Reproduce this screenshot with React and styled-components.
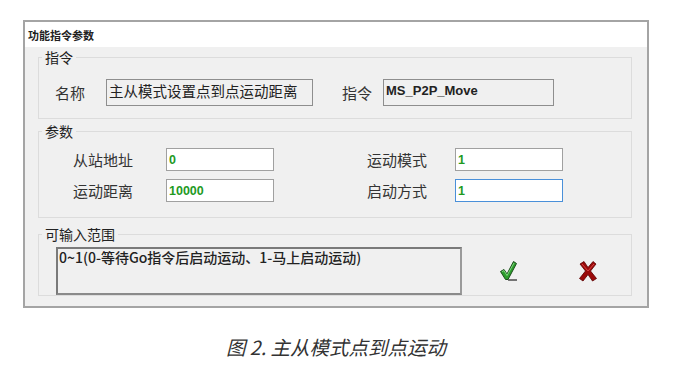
import React from 'react'
import styled, { createGlobalStyle } from 'styled-components'

const GlobalStyle = createGlobalStyle`
  body {
    margin: 0;
    background: #ffffff;
    font-family: "Noto Sans CJK SC", "Liberation Sans", sans-serif;
  }
`

const Page = styled.div`
  width: 679px;
  height: 379px;
  padding-top: 20px;
  box-sizing: border-box;
  display: flex;
  flex-direction: column;
`

const Window = styled.div`
  margin-left: 23px;
  width: 626px;
  height: 288px;
  box-sizing: border-box;
  border: 2px solid #a4a4a4;
  background: #f0f0f0;
  display: flex;
  flex-direction: column;
`

const TitleBar = styled.div`
  height: 25px;
  background: #ffffff;
  display: flex;
  align-items: center;
  padding-left: 3px;
  font-size: 11px;
  font-weight: bold;
  color: #222;
`

const Body = styled.div`
  padding: 2px 15px 10px 13px;
  display: flex;
  flex-direction: column;
`

const Group = styled.fieldset`
  margin: ${p => p.$mt || 0}px 0 0 0;
  padding: ${p => p.$pad};
  border: 1px solid #dcdcdc;
  min-width: 0;
`

const Legend = styled.legend`
  font-size: 14px;
  line-height: 16px;
  padding: 0 3px;
  margin-left: 3px;
  color: #222;
`

const Row = styled.div`
  display: flex;
  align-items: center;
  padding-left: ${p => p.$pl || 0}px;
`

const Label = styled.span`
  width: ${p => p.$w}px;
  margin-left: ${p => p.$ml || 0}px;
  flex: none;
  font-size: 15px;
  color: #333;
`

const ReadBox = styled.div`
  width: ${p => p.$w}px;
  height: 27px;
  box-sizing: border-box;
  border: 1px solid #8e8e8e;
  background: #f0f0f0;
  padding: 1px 2px;
  font-size: ${p => (p.$latin ? 13 : 14.5)}px;
  line-height: 20px;
  color: #222;
  font-family: ${p => (p.$latin ? '"Liberation Sans", sans-serif' : 'inherit')};
  font-weight: ${p => (p.$latin ? 'bold' : 'normal')};
`

const ParamGrid = styled.div`
  display: grid;
  grid-template-columns: 201px 196px;
  column-gap: 93px;
  row-gap: 8px;
  padding-left: 34px;
`

const Field = styled.div`
  display: flex;
  align-items: center;
`

const Input = styled.div`
  width: 108px;
  height: 23px;
  box-sizing: border-box;
  background: #ffffff;
  border: 1px solid ${p => (p.$focus ? '#4a90d9' : '#a0a0a0')};
  padding: 0 2px;
  display: flex;
  align-items: center;
  font-family: "Liberation Sans", sans-serif;
  font-weight: bold;
  font-size: 12.5px;
  color: #1f9a1f;
`

const RangeBox = styled.div`
  width: 406px;
  height: 48px;
  box-sizing: border-box;
  border: 2px solid #7a7a7a;
  border-right-color: #9a9a9a;
  border-bottom-color: #8a8a8a;
  background: #f0f0f0;
  padding: 0 1px;
  font-size: 14px;
  line-height: 17px;
  color: #222;
  font-weight: 500;
`

const IconButton = styled.div`
  margin-left: ${p => p.$ml}px;
  width: 20px;
  height: 22px;
  display: flex;
  align-items: center;
  justify-content: center;
`

const Caption = styled.div`
  margin-top: 27px;
  padding-right: 7px;
  text-align: center;
  font-size: 19.5px;
  line-height: 24px;
  font-style: italic;
  color: #333;
`

const CheckIcon = () => (
  <svg width="20" height="22" viewBox="0 0 20 22">
    <path d="M9 20 H18" stroke="#555" strokeWidth="1.6" />
    <path d="M1.5 11.5 L5 9.5 L8 14 L14.5 1.5 L17.5 3.5 L9 19.5 L6.5 19.5 Z"
      fill="#2d9e2d" stroke="#1c4d1c" strokeWidth="1" strokeLinejoin="round" />
    <path d="M3 11.6 L5 10.6 L8 15.5 L15 3" stroke="#7fd27f" strokeWidth="1" fill="none" />
  </svg>
)

const CrossIcon = () => (
  <svg width="20" height="22" viewBox="0 0 20 22">
    <path d="M2 4 L6 1.5 L10 7.5 L15 1.5 L18 4 L12.5 11 L18.5 18.5 L14.5 21 L10 14.5 L5 21 L1.5 18.5 L7.5 11 Z"
      fill="#9b0a0a" stroke="#5a0000" strokeWidth="0.8" strokeLinejoin="round" />
    <path d="M4 4 L10 11 L16 4" stroke="#d84545" strokeWidth="1" fill="none" />
  </svg>
)

export default function App() {
  return (
    <Page>
      <GlobalStyle />
      <Window>
        <TitleBar>功能指令参数</TitleBar>
        <Body>
          <Group $pad="14px 0 12px 0">
            <Legend>指令</Legend>
            <Row $pl={16}>
              <Label $w={51}>名称</Label>
              <ReadBox $w={207}>主从模式设置点到点运动距离</ReadBox>
              <Label $w={41} $ml={29}>指令</Label>
              <ReadBox $w={171} $latin>MS_P2P_Move</ReadBox>
            </Row>
          </Group>

          <Group $mt={4} $pad="9px 0 15px 0">
            <Legend>参数</Legend>
            <ParamGrid>
              <Field>
                <Label $w={93}>从站地址</Label>
                <Input>0</Input>
              </Field>
              <Field>
                <Label $w={88}>运动模式</Label>
                <Input>1</Input>
              </Field>
              <Field>
                <Label $w={93}>运动距离</Label>
                <Input>10000</Input>
              </Field>
              <Field>
                <Label $w={88}>启动方式</Label>
                <Input $focus>1</Input>
              </Field>
            </ParamGrid>
          </Group>

          <Group $mt={8} $pad="5px 0 0 0">
            <Legend>可输入范围</Legend>
            <Row $pl={17}>
              <RangeBox>0~1(0-等待Go指令后启动运动、1-马上启动运动)</RangeBox>
              <IconButton $ml={37}><CheckIcon /></IconButton>
              <IconButton $ml={59}><CrossIcon /></IconButton>
            </Row>
          </Group>
        </Body>
      </Window>
      <Caption>图 2. 主从模式点到点运动</Caption>
    </Page>
  )
}
